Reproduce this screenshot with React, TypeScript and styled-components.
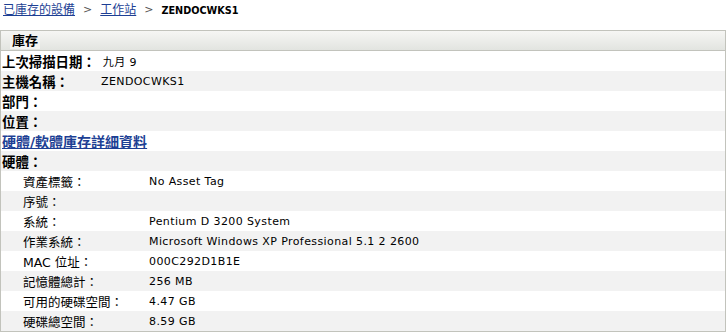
import React from "react";
import styled, { createGlobalStyle } from "styled-components";

const Global = createGlobalStyle`
  body { margin: 0; background: #fff; font-family: "DejaVu Sans", "Noto Sans CJK TC", sans-serif; color: #000; }
`;

const CJK = `"DejaVu Sans", "Noto Sans CJK TC", sans-serif`;

const Breadcrumb = styled.div`
  height: 30px;
  display: flex;
  align-items: flex-start;
  padding: 2px 0 0 3px;
  box-sizing: border-box;
  font-family: ${CJK};
  font-size: 12px;
  line-height: 16px;
  gap: 8px;
`;

const Crumb = styled.a`
  color: #1d3f94;
  text-decoration: underline;
  font-size: 12px;
`;

const Sep = styled.span`
  color: #555;
  font-size: 11px;
`;

const Current = styled.span`
  font-weight: bold;
  font-size: 9.7px;
  line-height: 17px;
`;

const Panel = styled.div`
  width: 726px;
  box-sizing: border-box;
  border: 1px solid #c2c3bc;
`;

const Header = styled.div`
  height: 19px;
  border-bottom: 1px solid #c2c3bc;
  background: linear-gradient(#f6f6f4, #e2e4e0);
  display: flex;
  align-items: center;
  padding-left: 9px;
`;

const HeaderTitle = styled.span`
  font-family: ${CJK};
  font-weight: bold;
  font-size: 13px;
  line-height: 17px;
  padding: 0 2px;
  background: #f4f4f2;
`;

const Row = styled.div<{ $alt: boolean; $indent?: boolean }>`
  height: 20px;
  display: flex;
  align-items: center;
  background: ${(p) => (p.$alt ? "#f2f2f2" : "#fff")};
  padding-left: ${(p) => (p.$indent ? "22px" : "1px")};
  font-family: ${CJK};
  font-size: 12px;
`;

const Label = styled.span<{ $width?: number }>`
  font-weight: bold;
  font-size: 13.4px;
  ${(p) => (p.$width ? `width: ${p.$width}px;` : "")}
  flex-shrink: 0;
`;

const SubLabel = styled.span`
  width: 126px;
  flex-shrink: 0;
  font-size: 12.5px;
`;

const Value = styled.span<{ $gap?: number }>`
  font-size: 11px;
  letter-spacing: 0.4px;
  margin-left: ${(p) => p.$gap ?? 0}px;
`;

const DetailLink = styled.a`
  font-weight: bold;
  font-size: 14px;
  color: #1d3f94;
  text-decoration: underline;
`;

const sub: [string, string][] = [
  ["資產標籤：", "No Asset Tag"],
  ["序號：", ""],
  ["系統：", "Pentium D 3200 System"],
  ["作業系統：", "Microsoft Windows XP Professional 5.1 2 2600"],
  ["MAC 位址：", "000C292D1B1E"],
  ["記憶體總計：", "256 MB"],
  ["可用的硬碟空間：", "4.47 GB"],
  ["硬碟總空間：", "8.59 GB"],
];

export default function App() {
  return (
    <>
      <Global />
      <Breadcrumb>
        <Crumb>已庫存的設備</Crumb>
        <Sep>&gt;</Sep>
        <Crumb>工作站</Crumb>
        <Sep>&gt;</Sep>
        <Current>ZENDOCWKS1</Current>
      </Breadcrumb>
      <Panel>
        <Header>
          <HeaderTitle>庫存</HeaderTitle>
        </Header>
        <Row $alt={false}>
          <Label>上次掃描日期：</Label>
          <Value $gap={7}>九月 9</Value>
        </Row>
        <Row $alt={true}>
          <Label $width={99}>主機名稱：</Label>
          <Value>ZENDOCWKS1</Value>
        </Row>
        <Row $alt={false}>
          <Label>部門：</Label>
        </Row>
        <Row $alt={true}>
          <Label>位置：</Label>
        </Row>
        <Row $alt={false}>
          <DetailLink>硬體/軟體庫存詳細資料</DetailLink>
        </Row>
        <Row $alt={true}>
          <Label>硬體：</Label>
        </Row>
        {sub.map(([l, v], i) => (
          <Row key={l} $alt={i % 2 === 1} $indent>
            <SubLabel>{l}</SubLabel>
            <Value>{v}</Value>
          </Row>
        ))}
      </Panel>
    </>
  );
}
